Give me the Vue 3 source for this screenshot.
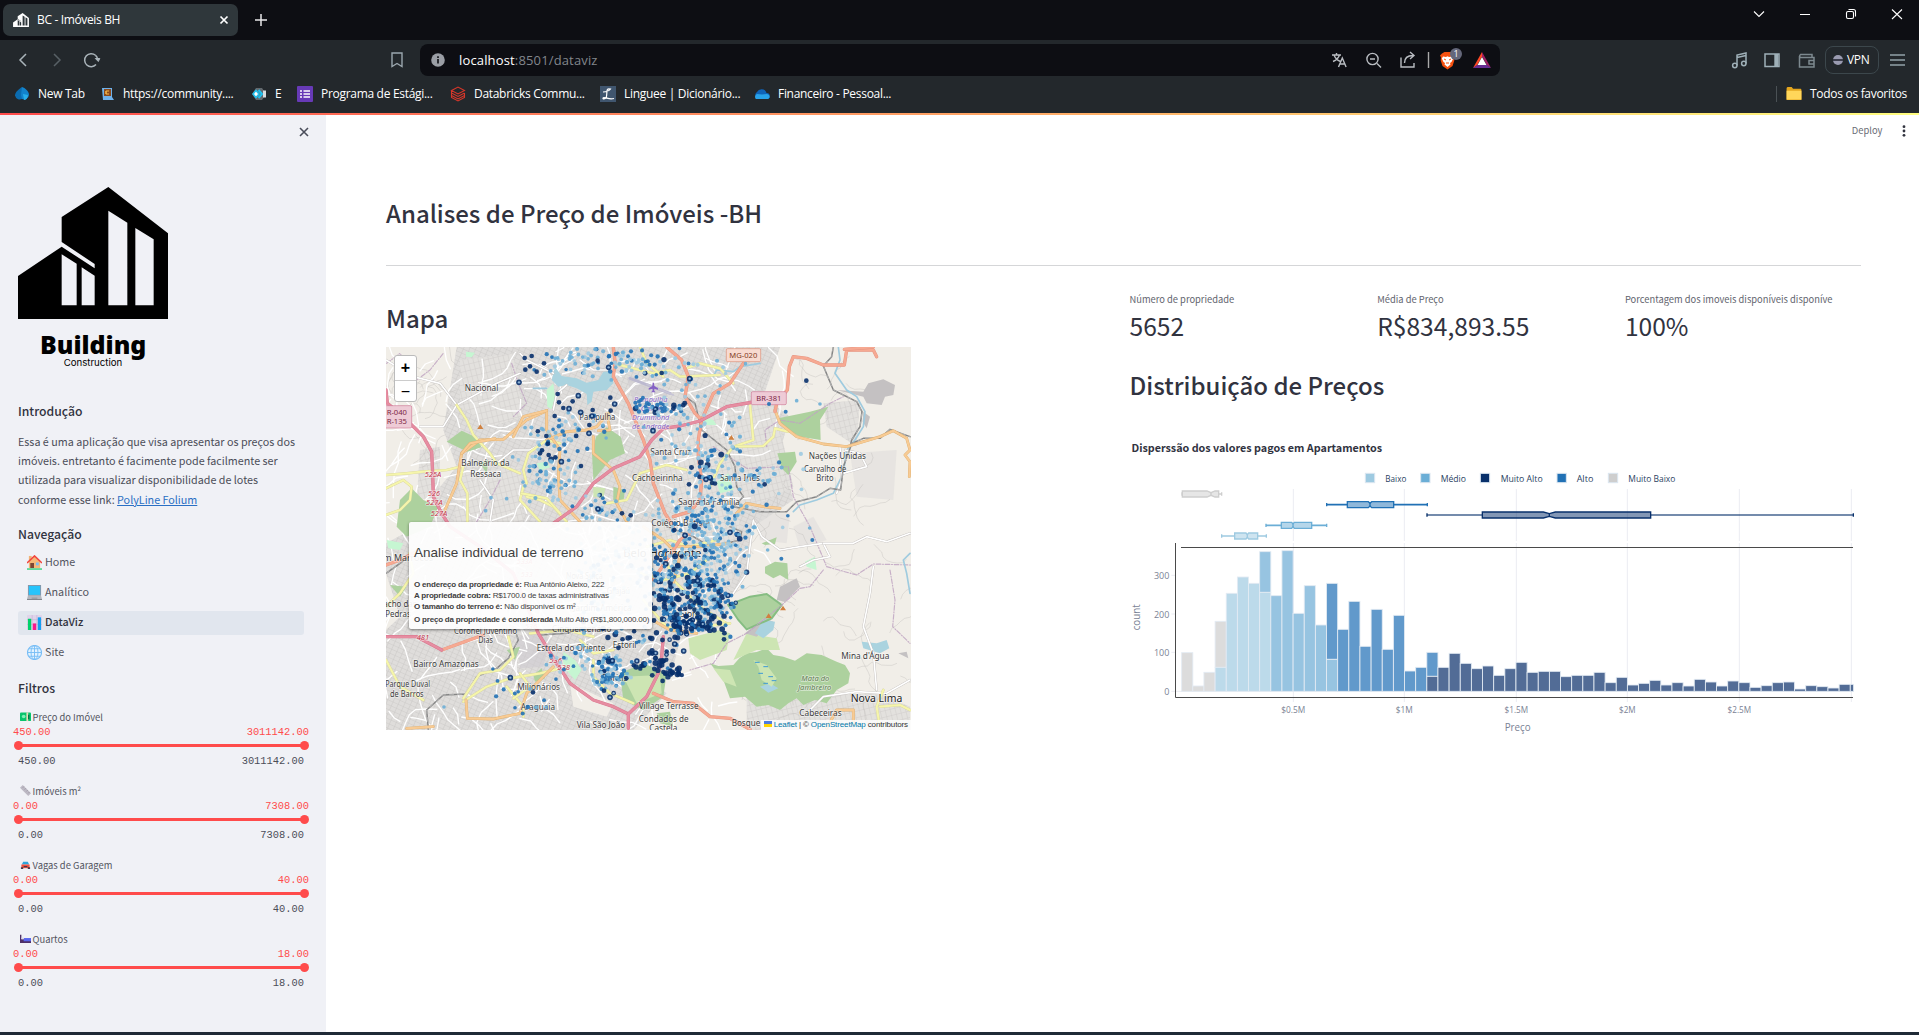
<script setup>
const bookmarks = [
  { icon: 'drop', label: 'New Tab', left: 14, w: 85 },
  { icon: 'robot', label: 'https://community....', left: 99, w: 152 },
  { icon: 'hex', label: 'E', left: 251, w: 46 },
  { icon: 'list', label: 'Programa de Estági...', left: 297, w: 153 },
  { icon: 'layers', label: 'Databricks Commu...', left: 450, w: 150 },
  { icon: 'ling', label: 'Linguee | Dicionário...', left: 600, w: 154 },
  { icon: 'cloud', label: 'Financeiro - Pessoal...', left: 754, w: 150 }
]
const nav = [
  { icon: 'home', label: 'Home' },
  { icon: 'laptop', label: 'Analítico' },
  { icon: 'chart', label: 'DataViz', active: true },
  { icon: 'globe', label: 'Site' }
]
const filters = [
  { icon: 'cash', label: 'Preço do Imóvel', min: '450.00', max: '3011142.00' },
  { icon: 'ruler', label: 'Imóveis m²', min: '0.00', max: '7308.00' },
  { icon: 'car', label: 'Vagas de Garagem', min: '0.00', max: '40.00' },
  { icon: 'bed', label: 'Quartos', min: '0.00', max: '18.00' }
]
const metrics = [
  { label: 'Número de propriedade', value: '5652' },
  { label: 'Média de Preço', value: 'R$834,893.55' },
  { label: 'Porcentagem dos imoveis disponíveis disponíve', value: '100%' }
]

/* ---- histogram ---- */
const tone = { g: '#dcdcdc', l: '#bcdaea', m: '#97c4e1', a: '#6199cb', d: '#526c96' }
const base = 664
const tops = [
  ['g', 548], ['g', 648], ['g', 607], ['g', 454, 'l', 592], ['l', 370], ['l', 321], ['l', 340],
  ['m', 245, 'l', 367], ['m', 377], ['m', 242], ['m', 430], ['m', 347], ['m', 465],
  ['a', 340, 'm', 568], ['a', 478], ['a', 394], ['a', 529], ['a', 418], ['a', 538], ['a', 436],
  ['a', 603], ['a', 592], ['a', 547, 'd', 619], ['d', 592], ['d', 550], ['d', 580], ['d', 596],
  ['d', 588], ['d', 616], ['d', 596], ['d', 577], ['d', 607], ['d', 604], ['d', 604], ['d', 620],
  ['d', 616], ['d', 616], ['d', 607], ['d', 638], ['d', 622], ['d', 645], ['d', 640], ['d', 631],
  ['d', 645], ['d', 638], ['d', 648], ['d', 628], ['d', 636], ['d', 648], ['d', 633], ['d', 638],
  ['d', 652], ['d', 647], ['d', 638], ['d', 636], ['d', 657], ['d', 647], ['d', 650], ['d', 654],
  ['d', 643], ['d', 643]
]
const bars = []
tops.forEach((t, i) => {
  const x = 215 + 33.43 * i
  const w = i === 60 ? 10 : 33.43
  bars.push({ x, y: t[1], w, h: (t[3] || base) - t[1], c: tone[t[0]] })
  if (t[2]) bars.push({ x, y: t[3], w, h: base - t[3], c: tone[t[2]] })
})
const ticksX = [[550, '$0.5M', 72], [883, '$1M', 51], [1219, '$1.5M', 71], [1552, '$2M', 50], [1888, '$2.5M', 71], [2224, '', 0]]
const ticksY = [[316, '300'], [432, '200'], [547, '100'], [664, '0']]
const boxes = [
  { c: '#cecece', y: 72, lo: 216, q1: 217, m: 303, q3: 326, hi: 335, n: 12 },
  { c: '#2171b5', y: 104, lo: 650, q1: 712, m: 780, q3: 851, hi: 952, n: 5 },
  { c: '#08306b', y: 135, lo: 951, q1: 1117, m: 1318, q3: 1622, hi: 2230, n: 18 },
  { c: '#6baed6', y: 166, lo: 468, q1: 514, m: 549, q3: 605, hi: 650, n: 4 },
  { c: '#9ecae1', y: 198, lo: 335, q1: 374, m: 412, q3: 443, hi: 469, n: 4 }
]
const boxPath = (b) => {
  const t = b.y - 9, u = b.y + 9
  return `M${b.q1} ${t}H${b.m - b.n}L${b.m} ${b.y - 4}L${b.m + b.n} ${t}H${b.q3}V${u}H${b.m + b.n}L${b.m} ${b.y + 4}L${b.m - b.n} ${u}H${b.q1}Z`
}
const legend = [
  { c: '#9ecae1', x: 780, t: 'Baixo', tx: 826, w: 63 },
  { c: '#6baed6', x: 946, t: 'Médio', tx: 992, w: 76 },
  { c: '#08306b', x: 1125, t: 'Muito Alto', tx: 1172, w: 126 },
  { c: '#2171b5', x: 1355, t: 'Alto', tx: 1400, w: 50 },
  { c: '#cecece', x: 1509, t: 'Muito Baixo', tx: 1555, w: 141 }
]

/* ---- map ---- */
let seed = 7919
const rnd = () => {
  seed = (seed + 0x6d2b79f5) | 0
  let t = Math.imul(seed ^ (seed >>> 15), 1 | seed)
  t = (t + Math.imul(t ^ (t >>> 7), 61 | t)) ^ t
  return ((t ^ (t >>> 14)) >>> 0) / 4294967296
}
const gauss = () => (rnd() + rnd() + rnd() - 1.5) / 0.75
const streets = []
for (let i = 0; i < 300; i++) {
  let x = 18 + rnd() * 1200, y = 21 + rnd() * 1149
  if (x > 1130 && y > 300) x -= 500
  if (x > 1020 && y > 700) x -= 700
  let a = rnd() * 6.28
  let d = `M${x.toFixed(0)} ${y.toFixed(0)}`
  const n = 2 + Math.floor(rnd() * 4)
  for (let k = 0; k < n; k++) {
    a += (rnd() - 0.5) * 1.1
    x += Math.cos(a) * (18 + rnd() * 24)
    y += Math.sin(a) * (18 + rnd() * 24)
    d += `L${x.toFixed(0)} ${y.toFixed(0)}`
  }
  streets.push(d)
}
const trails = []
for (let i = 0; i < 70; i++) {
  let x = i < 18 ? 30 + rnd() * 200 : 1150 + rnd() * 420
  let y = i < 18 ? 40 + rnd() * 260 : 40 + rnd() * 1100
  let a = rnd() * 6.28
  let d = `M${x.toFixed(0)} ${y.toFixed(0)}`
  for (let k = 0; k < 8; k++) {
    a += (rnd() - 0.5) * 1.8
    x += Math.cos(a) * 16
    y += Math.sin(a) * 16
    d += `L${x.toFixed(0)} ${y.toFixed(0)}`
  }
  trails.push(d)
}
// centre x, centre y, spread x, spread y, amount, share of dark points, share of mid points
const clusters = [
  [600, 55, 90, 32, 40, 0, 0.25], [740, 60, 80, 42, 50, 0.02, 0.4], [850, 80, 70, 45, 20, 0.02, 0.3],
  [500, 330, 80, 70, 46, 0.03, 0.3], [510, 430, 60, 50, 42, 0, 0.15], [590, 270, 70, 45, 22, 0.15, 0.3],
  [845, 205, 55, 12, 28, 0.25, 0.6], [790, 195, 18, 18, 12, 0.2, 0.7],
  [960, 290, 100, 60, 46, 0.03, 0.12], [970, 150, 110, 70, 22, 0, 0.1],
  [970, 395, 35, 50, 36, 0.25, 0.3], [1040, 420, 80, 70, 34, 0, 0.12], [1180, 420, 90, 80, 24, 0, 0.2],
  [960, 540, 110, 55, 115, 0.01, 0.22], [1040, 580, 60, 60, 50, 0.06, 0.4], [650, 500, 50, 32, 26, 0.03, 0.25],
  [950, 660, 120, 50, 100, 0.08, 0.35], [860, 700, 60, 60, 45, 0.35, 0.3],
  [900, 780, 90, 60, 110, 0.38, 0.34], [990, 760, 55, 60, 90, 0.3, 0.42], [940, 850, 75, 30, 90, 0.6, 0.35],
  [680, 700, 110, 120, 110, 0.02, 0.25], [690, 970, 42, 32, 46, 0.03, 0.4], [690, 1015, 50, 32, 40, 0.03, 0.4],
  [570, 940, 50, 50, 20, 0, 0.25], [825, 955, 45, 32, 30, 0.8, 0.2], [875, 995, 34, 18, 18, 0.95, 0.05],
  [800, 890, 90, 26, 22, 0.5, 0.3], [400, 1070, 100, 60, 14, 0, 0.6]
]
const dots = []
clusters.forEach(([cx, cy, sx, sy, n, pd, pm]) => {
  for (let i = 0; i < n; i++) {
    const k = rnd()
    const x = cx + gauss() * sx, y = cy + gauss() * sy
    if (y < 22) continue
    dots.push(k < pd
      ? { x, y, c: '#08306b', r: 6.5 + rnd() * 2.5, ring: rnd() < 0.12 }
      : k < pd + pm
        ? { x, y, c: '#2171b5', r: 5.3 + rnd() * 1.5 }
        : { x, y, c: rnd() < 0.6 ? '#6baed6' : '#9ecae1', r: 5.3 + rnd() })
  }
})
const dark = [[434, 54], [455, 48], [492, 70], [436, 89], [450, 79], [470, 95], [417, 127, 1], [533, 162], [537, 187], [578, 184], [595, 167, 1], [550, 204], [567, 206, 1], [602, 217, 1], [524, 228], [638, 210], [636, 228, 1], [691, 173], [704, 192, 1], [692, 212], [628, 255], [627, 280, 1], [499, 288], [504, 311], [486, 331], [480, 340], [526, 352], [506, 345], [544, 365, 1], [603, 378], [653, 62], [686, 82, 1], [845, 99], [929, 116, 1], [1279, 122], [654, 507, 1], [391, 1013, 1], [459, 1057], [726, 520], [752, 526], [739, 1015], [672, 1052], [690, 1072, 1], [697, 962, 1], [976, 630], [819, 272, 1], [978, 418, 1], [883, 570], [915, 586, 1], [953, 722, 1], [1050, 577, 1], [1032, 898], [911, 933, 1], [884, 912, 1], [927, 433], [996, 429], [1154, 433]]
dark.forEach(([x, y, ring]) => dots.push({ x, y, c: '#08306b', r: ring ? 8.5 : 7, ring: !!ring }))
;[[1297, 600], [1204, 656], [1217, 215], [1167, 192]].forEach(([x, y]) => dots.push({ x, y, c: '#2171b5', r: 6 }))
;[[1289, 564], [1163, 630], [1250, 182], [1320, 192], [192, 1101], [380, 476], [333, 473], [317, 512]].forEach(([x, y]) => dots.push({ x, y, c: '#6baed6', r: 5.5 }))

const greens = [
  'M200 305L245 272L285 290L305 322L262 335Z', 'M60 480L95 445L130 480L175 500L150 560L80 590L50 560Z',
  'M648 290L680 262L722 290L735 340L690 360L640 420L636 340Z', 'M1195 235L1290 215L1345 200L1320 240L1322 300L1260 290L1210 262Z',
  'M1192 340L1245 335L1250 365L1225 405L1205 385Z', 'M1155 680L1185 665L1222 670L1225 720L1200 705L1180 715L1155 700Z',
  'M1045 795L1110 770L1160 762L1195 790L1205 795L1175 835L1100 868L1075 840Z',
  'M1145 610L1190 592L1185 612L1155 615Z',
  'M990 970L1015 978L1060 975L1078 955L1100 940L1130 936L1160 925L1180 945L1210 950L1245 962L1280 940L1325 945L1370 965L1395 975L1410 1000L1405 1030L1370 1050L1340 1090L1305 1080L1270 1095L1250 1075L1225 1090L1200 1110L1165 1095L1130 1100L1095 1070L1050 1075L1030 1020Z',
  'M720 1000L790 970L860 1000L850 1070L790 1110L730 1080Z', 'M380 930L420 920L405 960Z', 'M300 370L325 360L320 400Z', 'M30 735L80 740L60 770Z',
  'M830 1120L870 1115L880 1160L840 1150Z', 'M460 1005L485 985L495 1015L465 1025Z', 'M700 440L735 450L730 485L700 480Z'
]
const limes = ['M640 440L676 445L670 475L640 470Z', 'M925 895L1020 870L1050 880L1040 930L960 960L930 940Z', 'M1100 880L1190 895L1200 930L1130 930L1060 960Z', 'M730 1010L840 1005L845 1060L770 1090Z']
const mints = ['M500 150L520 130L525 170L515 208L502 200Z', 'M1010 425L1045 400L1060 450L1020 460Z', 'M470 370L500 365L510 382L480 392Z', 'M550 935L585 960L605 990L585 1020L550 980Z', 'M960 225L1000 240L1010 255L975 255Z', 'M1275 665L1305 650L1310 690L1280 680Z', 'M258 35L285 38L275 52L258 50Z', 'M20 600L70 610L60 630L25 625Z']
const waters = ['M525 80L545 108L590 115L620 128L655 120L670 95L695 92L700 130L680 150L640 155L635 185L622 195L620 162L590 145L560 135L535 140L515 120Z', 'M1125 880L1150 840L1185 845L1180 870L1150 895Z', 'M1445 905L1490 910L1520 900L1528 925L1500 940L1450 925Z', 'M1140 1040L1170 1030L1195 1045L1165 1058Z']
const rocks = ['M1370 150L1450 155L1465 130L1510 118L1545 135L1540 165L1515 170L1505 195L1460 190L1450 170Z', 'M1450 215L1470 230L1460 265L1448 245Z', 'M1200 740L1250 715L1260 740L1215 785L1190 780Z', 'M1095 880L1150 835L1180 845L1130 890Z', 'M1555 940L1580 935L1585 955Z']
const yellows = [
  'M18 405L80 400L130 395L200 390L250 378', 'M18 525L60 510L90 480L95 440L70 420L18 445', 'M230 195L260 240L280 285L330 340L350 370L420 400',
  'M250 378L240 420L262 460L262 545', 'M88 640L100 700L60 760L18 800', 'M440 470L480 480L520 500L560 545', 'M430 440L420 480L480 545', 'M440 430L430 390L445 340L500 300L540 310', 'M425 460L500 475L540 520',
  'M700 70L760 85L820 100L870 90L900 110L1020 105', 'M780 20L800 70L850 110', 'M920 85L960 70L1020 85L1060 130', 'M1110 195L1120 300L1060 320L1020 370L990 440', 'M1060 320L1150 318L1180 290L1185 265L1225 275',
  'M680 490L740 480L760 440L780 400', 'M780 400L860 375L920 390', 'M250 1085L320 1040L390 1015L480 1000L540 985', 'M385 890L400 950L360 990L300 1000L250 1075', 'M380 1040L430 1100L430 1130', 'M420 1000L450 1040L400 1075',
  'M600 900L640 940L700 930', 'M640 960L640 1010L690 1060L760 1090', 'M1510 1050L1490 1100L1500 1165', 'M1500 1100L1560 1095L1590 1110', 'M450 880L560 870L640 890', 'M780 700L850 720L930 700L980 660', 'M800 620L870 600L930 620L1010 600', 'M790 780L850 850L900 880', 'M850 640L880 720L960 800L1040 850', 'M18 960L60 1040L130 1080', 'M940 800L960 860L1050 850'
]
const oranges = [
  'M195 510L230 430L245 340L300 300L370 298L410 265L440 240L500 212', 'M245 340L270 310L345 296', 'M500 212L500 270L540 330L535 400L540 480L600 545', 'M500 212L430 230L400 290', 'M690 215L650 260L620 270L560 275L500 300',
  'M1185 210L1200 250L1250 290L1330 312L1400 320L1450 305L1500 290L1540 272L1580 295L1590 330L1575 345L1590 365L1588 410', 'M640 290L640 340L700 390L720 440L710 490L740 545', 'M1070 520L1100 490L1150 500L1200 505', 'M258 1080L262 1135L340 1137L420 1120L440 1060L520 980', 'M80 1165L160 1160', 'M1340 1165L1370 1110L1420 1110L1420 1150',
  'M870 620L960 620L1050 610', 'M790 560L850 600L900 650L880 730', 'M800 830L870 870L950 880', 'M680 220L690 270L655 272'
]
const salmons = [
  'M700 21L705 65L700 110L745 190L765 240L790 300L810 360L820 430L855 520L880 560', 'M860 21L905 60L925 110L915 170L945 220L965 240', 'M1090 70L1050 130L1000 160L965 240L955 300L955 350L965 420L960 480L930 515L880 530',
  'M1490 50L1480 30L1400 30L1393 75L1330 75L1280 55L1240 50L1228 80L1222 150L1190 190L1185 215', 'M18 675L60 660L100 640', 'M185 930L310 885', 'M820 1060L880 1085L940 1090L990 1130L1050 1135L1110 1168', 'M1393 28L1480 21', 'M820 720L900 600L970 550'
]
const pinks = [
  'M18 150L22 190L70 230L130 290L155 335L158 400L160 470L185 520L210 560L300 620L400 700L450 820L475 880L530 970L570 1030L640 1080L700 1100L745 1122', 'M745 1165L745 1122L800 1070L835 1000L845 950L850 890', 'M520 550L590 500L640 430L700 385L780 350L815 300L850 265L900 258L960 243L1040 200L1120 186L1160 180', 'M18 890L110 890L185 930'
]
const rails = [
  'M1360 21L1355 50L1330 78L1360 150L1430 185L1446 215L1440 260L1415 300L1412 312', 'M1412 312L1450 295L1500 295L1530 268L1590 290', 'M915 170L945 190L965 270L1040 330L1065 380L1070 440L1090 470L1060 500L1140 515L1220 515L1250 485L1310 470L1350 445L1382 450L1390 380L1415 312', 'M145 1168L140 1110L190 1065L260 1062L290 1010L350 985L385 955L415 900L410 885', 'M18 700L60 670L110 630', 'M860 560L940 590L990 620L1040 610L1080 600L1085 575L1050 560', 'M480 885L560 880L640 860'
]
const creeks = ['M1375 21L1380 60L1365 100L1400 150L1430 170L1455 215L1450 260L1425 300L1400 330L1390 400L1360 460L1310 480L1260 495L1240 515', 'M1590 640L1570 660L1580 700L1590 760', 'M1140 70L1080 80L1060 95L1010 90L1000 110', 'M460 145L500 145']
const bounds = ['M1160 320L1155 270L1200 240L1260 250L1350 190L1390 170', 'M1225 380L1240 470L1290 560L1340 680L1430 705L1480 672L1593 675', 'M1330 690L1290 740L1260 745L1200 800L1100 880L1040 910L1000 970L930 990', 'M1530 690L1545 780L1538 860L1590 910', 'M1000 320L1100 385L1220 380', 'M395 70L415 130L440 190L400 230', 'M360 420L330 480L290 545', 'M20 70L60 40L110 120L150 90L190 40']
const avenues = ['M18 60L100 110L180 130L230 195L350 130L420 100', 'M230 195L190 260L120 260', 'M1120 540L1145 590L1200 630L1260 620L1330 610L1350 650L1300 660L1260 680', 'M1330 610L1420 610L1460 590L1520 605L1590 580', 'M1480 680L1470 760L1450 860L1480 940L1490 1050', 'M1120 540L1110 620L1100 700L1060 760', 'M1380 320L1385 420L1370 460', 'M1395 330L1440 340L1460 380L1390 400', 'M1280 1120L1330 1070L1430 1055L1520 1060L1590 1020', 'M350 370L400 330L450 330L520 290', 'M300 420L340 480L330 545', 'M520 100L440 60L420 40', 'M560 135L530 160L520 210', 'M600 60L640 90L690 90']
// label: x, y, text, width, colour, size, italic
const places = [
  [254, 154, 'Nacional', 101], [598, 239, 'Pampulha', 108], [244, 377, 'Balneário da', 145], [271, 410, 'Ressaca', 92], [756, 423, 'Cachoeirinha', 152],
  [811, 345, 'Santa Cruz', 122], [1019, 423, 'Santa Inês', 121], [895, 494, 'Sagrada Família', 185], [814, 557, 'Colégio Batista', 176], [1286, 356, 'Nações Unidas', 172],
  [1272, 395, 'Carvalho de', 127], [1309, 424, 'Brito', 52], [1384, 956, "Mina d'Água", 144], [1412, 1087, 'Nova Lima', 155, '#222', 31], [1258, 1128, 'Cabeceiras', 127],
  [1055, 1159, 'Bosque', 86], [222, 881, 'Coronel Juventino', 189], [295, 910, 'Dias', 44], [100, 980, 'Bairro Amazonas', 196], [16, 1042, 'Parque Duval', 134],
  [30, 1071, 'de Barros', 101], [412, 1051, 'Milionários', 128], [422, 1109, 'Araguaia', 103], [590, 1165, 'Vila São João', 146], [470, 932, 'Estrela do Oriente', 206],
  [698, 924, 'Estoril', 71], [665, 1022, 'Buritis', 78], [776, 1106, 'Village Terrasse', 180], [776, 1145, 'Condados de', 150], [808, 1173, 'Castela', 84],
  [516, 877, 'Cinquentenário', 178], [10, 662, 'm Marrocos', 150], [10, 802, 'acho das', 100], [16, 832, 'Pedras', 76], [730, 650, 'Belo Horizonte', 234, '#222', 30],
  [558, 718, 'Nova Suíça', 110], [680, 762, 'Grajaú', 70], [580, 812, 'Jardim América', 175], [900, 832, 'Sion', 52],
  [1264, 1022, 'Mata do', 84, '#5d7a50', 22, 1], [1254, 1049, 'Jambreiro', 100, '#5d7a50', 22, 1],
  [762, 186, 'Pampulha', 100, '#8461c4', 22, 1], [782, 213, 'Carlos', 70, '#8461c4', 22, 1], [756, 240, 'Drummond', 112, '#8461c4', 22, 1], [756, 267, 'de Andrade', 112, '#8461c4', 22, 1],
  [134, 410, '525A', 50, '#c2364b', 22, 1], [144, 469, '526', 36, '#c2364b', 22, 1], [138, 496, '527A', 50, '#c2364b', 22, 1], [152, 528, '527A', 50, '#c2364b', 22, 1],
  [110, 900, '481', 38, '#c2364b', 22, 1], [508, 968, '536', 38, '#c2364b', 22, 1], [532, 990, '538', 38, '#c2364b', 22, 1], [410, 672, '533A', 48, '#c2364b', 22, 1], [422, 710, '533', 36, '#c2364b', 22, 1], [434, 866, '536', 38, '#c2364b', 22, 1]
]
</script>

<template>
  <div class="window">
    <div class="tabstrip">
      <div class="tab">
        <svg class="fav" viewBox="54 231 450 397"><path fill="#fff" fill-rule="evenodd" d="M54 498L185 410L284 475V462L185 396V321L325 231L504 370V627H54ZM325 302V586H382V338ZM406 354V586H461V388ZM185 433V586H230V461ZM245 472V586H284V497Z" /></svg>
        <span>BC - Imóveis BH</span>
        <svg class="x" viewBox="0 0 10 10"><path d="M1.5 1.5l7 7m0-7l-7 7" stroke="#fff" stroke-width="1.7" /></svg>
      </div>
      <svg class="plus" viewBox="0 0 12 12"><path d="M6 0v12M0 6h12" stroke="#e8e8ea" stroke-width="1.5" /></svg>
      <svg class="winctl" width="160" height="20" viewBox="0 0 160 20" fill="none" stroke="#fff" stroke-width="1.1">
        <path d="M4 7.5l5 5 5-5M50 10.5h10" /><rect x="96.500" y="7.500" width="7" height="7" rx="1.500" /><path d="M98.500 5.500h5a2 2 0 0 1 2 2v5" /><path d="M142 5.500l10 9.500m0-9.500l-10 9.500" />
      </svg>
    </div>

    <div class="toolbar">
      <svg class="navicons" width="100" height="20" viewBox="0 0 100 20" fill="none" stroke-width="1.500">
        <path d="M17 4L11 10l6 6" stroke="#aab4ba" /><path d="M45 4l6 6-6 6" stroke="#586066" /><path d="M86.500 5.300A6.500 6.500 0 1 0 87 14.500M86.500 5.300a5.500 5.500 0 0 1 2 3.500" stroke="#aab4ba" /><path d="M86.300 8.500h4.500l-1.500 3z" fill="#aab4ba" stroke="#aab4ba" stroke-width="1" />
      </svg>
      <svg class="mark" width="12" height="16" viewBox="0 0 12 16"><path d="M1 1h10v13.500L6 11.500l-5 3z" fill="none" stroke="#9ba7ae" stroke-width="1.400" /></svg>
      <div class="url">
        <svg width="14" height="14" viewBox="0 0 14 14"><circle cx="7" cy="7" r="6.800" fill="#9a9ea5" /><path d="M7 6v4.500M7 3.200v1.700" stroke="#15161b" stroke-width="1.700" /></svg>
        <span class="addr"><b>localhost</b>:8501/dataviz</span>
        <svg class="urlicons" width="168" height="32" viewBox="0 0 168 32" fill="none" stroke="#b9bdc2" stroke-width="1.400">
          <path d="M6 11h9M10.500 9v2M8 11c1 3 4 5.500 6.500 6.500M13.500 11c-1 3-4 5.500-6.500 6.500M12.500 23l3.800-9 3.800 9M14 20h4.700" />
          <circle cx="46.500" cy="15" r="5.600" /><path d="M51 19.500l4 4M44 15h5" />
          <path d="M75 13.500v9.500h13v-4M78.500 19c0-5 3-7.500 8.500-7.500M84 8l4 3.500-4 3.500" />
          <path d="M102.500 8v16" stroke="#aaa" />
          <path d="M116 9.500l2.500-1.500h6l2.500 1.500 2 2-1 2 .3 3-1.800 5.500-5 3.500-5-3.500-1.800-5.500.3-3-1-2z" fill="#f4500f" stroke="none" />
          <path d="M117 12.500l3 .5 1.500-.7 1.500.7 3-.5 1.200 2-1.700 3.500-1.500 1 .5 1.500-3 2.500-3-2.500.5-1.500-1.500-1-1.700-3.500z" fill="#fff" stroke="none" /><path d="M118 15l2 1M125 15l-2 1M120 19h3" stroke="#f4500f" stroke-width="1" />
          <circle cx="130" cy="10" r="6" fill="#64677a" stroke="none" />
          <path d="M156 8L147 24l4-2.500 5-9z" fill="#ff4724" stroke="none" /><path d="M156 8l9 16-4-2.500-5-9z" fill="#9e1f63" stroke="none" /><path d="M147 24h18l-4-3h-10z" fill="#662d91" stroke="none" /><path d="M156 13l-4.500 8h9z" fill="#fff" stroke="none" />
          <text x="127.600" y="13.300" class="badge">1</text>
        </svg>
      </div>
      <svg class="righticons" width="90" height="20" viewBox="0 0 90 20" fill="none" stroke="#9fb0b8" stroke-width="1.500">
        <path d="M7 15.500V5l9-2v10.500M7 7.500l9-2" /><circle cx="4.800" cy="15.500" r="2.200" /><circle cx="13.800" cy="13.500" r="2.200" />
        <rect x="35" y="4" width="14" height="12.500" /><path d="M46.300 4v12.500" stroke-width="4" />
        <path d="M82 7V4.500H70.500a1.800 1.800 0 0 0 0 3H84V17H69.500V6M84 10.500h-5v3.500h5" stroke="#7d898f" />
      </svg>
      <div class="vpn"><i></i>VPN</div>
      <svg class="burger" width="15" height="12" viewBox="0 0 15 12"><path d="M0 1h15M0 6h15M0 11h15" stroke="#93a1a8" stroke-width="1.400" /></svg>
    </div>

    <div class="bookmarks">
      <div v-for="b in bookmarks" :key="b.label" class="bm" :style="{ width: b.w + 'px' }">
        <svg width="16" height="16" viewBox="0 0 16 16">
          <template v-if="b.icon === 'drop'"><path d="M8 1C5 3 1 6 1 9.500A5 5 0 0 0 8 13z" fill="#0b6cb0" /><path d="M8 1c3 1 7 4 7 8a5 5 0 0 1-7 4L7 9z" fill="#1283cc" /><path d="M9 8l5 1c0 3-2 5-4 5z" fill="#28aeea" /></template>
          <template v-else-if="b.icon === 'robot'"><path d="M3 2h10v9l2 3H4z" fill="#6fb2ec" /><rect x="5" y="3" width="7" height="7" fill="#8b4a1c" /><path d="M10 5H7v3h3M7 5v3" stroke="#f6ba4c" fill="none" /></template>
          <template v-else-if="b.icon === 'hex'"><path d="M5 2h6l4 6-4 6H5L1 8z" fill="#62696e" /><path d="M5 4.500L2 8l3 3.500L8 8z" stroke="#1fc1ee" stroke-width="1.500" fill="#fff" /><path d="M7.500 4l3.500 4-3.500 4" stroke="#1fc1ee" stroke-width="2" fill="none" /><path d="M12 4.500h3v7h-3z" fill="#d8dcde" /></template>
          <template v-else-if="b.icon === 'list'"><rect width="16" height="16" rx="1" fill="#673ab7" /><path d="M3 5h2M3 8h2M3 11h2M6.500 5H13M6.500 8H13M6.500 11H13" stroke="#fff" stroke-width="1.500" /></template>
          <template v-else-if="b.icon === 'layers'"><path d="M1.500 4.500L8 1l6.500 3.500L8 8zM1.500 4.500V7L8 10.500 14.500 7M1.500 7v2.500L8 13l6.500-3.500V7M1.500 9.500v2L8 15l6.500-3.500v-2" fill="none" stroke="#d8372a" stroke-width="1.100" /></template>
          <template v-else-if="b.icon === 'ling'"><rect width="16" height="16" fill="#40566f" /><path d="M10 3C5 2 8 8 6 12c-3 2-4 0-2-.5 3 0 5 2.500 10 1M3 6c2 0 6-1 8-3.500" fill="none" stroke="#fff" stroke-width="1.200" /></template>
          <template v-else><path d="M3 12a3.500 3.500 0 0 1 0-6 5.200 5.200 0 0 1 9.500 1A3 3 0 0 1 13 13z" fill="#0f63b8" /><path d="M2 13a3 3 0 0 1 1-5l5 .5 5-.5c3 .5 3.500 4 1 5z" fill="#28a2ea" /></template>
        </svg>
        <span>{{ b.label }}</span>
      </div>
      <div class="allfav">
        <svg width="16" height="13" viewBox="0 0 16 14"><path d="M0 1.500C0 .5 1 0 2 0h3.500L7 2h7.500C15.500 2 16 2.500 16 3.500V14H0z" fill="#e3a51e" /><path d="M0 4h16v9.500H0z" fill="#ffd65a" /></svg>
        <span>Todos os favoritos</span>
      </div>
    </div>
    <div class="rainbow"></div>

    <div class="app">
      <aside>
        <div class="closebar"><svg width="10" height="10" viewBox="0 0 10 10"><path d="M1 1l8 8M9 1l-8 8" stroke="#4a4d5a" stroke-width="1.600" /></svg></div>
        <svg class="logo" viewBox="54 210 450 570">
          <path fill-rule="evenodd" d="M54 498L185 410L284 475V462L185 396V321L325 231L504 370V627H54ZM325 302V586H382V338ZM406 354V586H461V388ZM185 433V586H230V461ZM245 472V586H284V497Z" />
          <text x="120" y="733" font-size="74" font-weight="900" class="build" textLength="319" lengthAdjust="spacingAndGlyphs">Building</text>
          <text x="191" y="768" font-size="28" class="constr" textLength="176" lengthAdjust="spacingAndGlyphs">Construction</text>
        </svg>
        <h3 class="first">Introdução</h3>
        <p>Essa é uma aplicação que visa apresentar os preços dos<br>imóveis. entretanto é facimente pode facilmente ser<br>utilizada para visualizar disponibilidade de lotes<br>conforme esse link: <a>PolyLine Folium</a></p>
        <h3>Navegação</h3>
        <nav>
          <div v-for="n in nav" :key="n.label" class="item" :class="{ active: n.active }">
            <svg width="15" height="15" viewBox="0 0 16 16">
              <template v-if="n.icon === 'home'"><path d="M2 1h3v6H2z" fill="#f0b478" /><path d="M2 7l6-5.500L14 7v7.500H2z" fill="#f5b878" /><path d="M0 8.500L8 1l8 7.500" fill="none" stroke="#f2453d" stroke-width="1.700" /><path d="M3.500 8.500h4V14h-4z" fill="#7d4533" /><path d="M9.500 8h3v3h-3z" fill="#7bbcf5" /><path d="M0 14h16v2H0z" fill="#63d99b" /></template>
              <template v-else-if="n.icon === 'laptop'"><rect x="1" y="0" width="14" height="11.500" fill="#8796a8" /><rect x="2" y="1" width="12" height="9.500" fill="#27c4fb" /><path d="M1 11.500h14l1 3.500H0z" fill="#b3b6bd" /><path d="M0 15h16v1H0zM5 13.500h6v1H5z" fill="#83868d" /></template>
              <template v-else-if="n.icon === 'chart'"><rect width="16" height="16" rx="1" fill="#dfd3ea" /><path d="M0 5h16M0 10h16M5.500 0v16M10.500 0v16" stroke="#c3b1d2" stroke-width=".6" /><path d="M1 4h3.500v12H1z" fill="#00d26a" /><path d="M6.200 9h3.600v7H6.200z" fill="#f8178c" /><path d="M11.500 2.500H15V16h-3.500z" fill="#129ff0" /></template>
              <template v-else><circle cx="8" cy="8" r="7.500" fill="#e4f3ff" stroke="#79bef5" stroke-width="1.200" /><path d="M8 .5v15M.5 8h15M2 4h12M2 12h12" stroke="#79bef5" /><ellipse cx="8" cy="8" rx="3.700" ry="7.500" fill="none" stroke="#79bef5" /></template>
            </svg>
            <span>{{ n.label }}</span>
          </div>
        </nav>
        <h3 class="filt">Filtros</h3>
        <div v-for="f in filters" :key="f.label" class="filter">
          <div class="flabel">
            <svg width="11" height="11" viewBox="0 0 12 12">
              <template v-if="f.icon === 'cash'"><rect y="1.500" width="12" height="9.500" rx="1" fill="#08c46c" /><path d="M7 1.500h2V11H7z" fill="#e9dcb8" /><circle cx="4" cy="6" r="2" fill="#7ff0b5" /><path d="M9.500 4v5" stroke="#037548" stroke-width="1.500" /></template>
              <template v-else-if="f.icon === 'ruler'"><path d="M3 0l9 9-3 3-9-9z" fill="#bdb9c4" /><path d="M3 3l1.500-1.500M5 5l1.500-1.500M7 7l1.500-1.500M9 9l1.500-1.500" stroke="#918d99" stroke-width=".7" /></template>
              <template v-else-if="f.icon === 'car'"><path d="M3.500 3h5l1.500 3H2z" fill="#2fa6dc" /><path d="M1.500 6h9v4h-9z" fill="#f3503e" /><path d="M1 9h2.500v2H1zM8.500 9H11v2H8.500zM4 7.500h4V9H4z" fill="#433b4c" /></template>
              <template v-else><path d="M0 2h1.500v4.500H12V11H0z" fill="#4e3068" /><path d="M4 5.500h8v3.500H4z" fill="#5866ee" /><path d="M1.500 5H4v2H1.500z" fill="#dcd9ea" /></template>
            </svg>
            <span>{{ f.label }}</span>
          </div>
          <div class="vals red"><span>{{ f.min }}</span><span>{{ f.max }}</span></div>
          <div class="track"><i></i><i></i></div>
          <div class="vals"><span>{{ f.min }}</span><span>{{ f.max }}</span></div>
        </div>
      </aside>

      <main>
        <div class="top"><span>Deploy</span><svg width="4" height="12" viewBox="0 0 4 12" fill="#31333f"><circle cx="2" cy="1.700" r="1.400" /><circle cx="2" cy="6" r="1.400" /><circle cx="2" cy="10.300" r="1.400" /></svg></div>
        <h1>Analises de Preço de Imóveis -BH</h1>
        <hr>
        <div class="cols">
          <section class="left">
            <h2>Mapa</h2>
            <div class="map">
              <svg width="525" height="383" viewBox="18 21 1575 1149">
                <defs>
                  <pattern id="grid" width="17" height="13" patternUnits="userSpaceOnUse" patternTransform="rotate(24)"><rect width="17" height="13" fill="#dfdddb" /><path d="M0 0H17M0 0V13" stroke="#cbc9c7" stroke-width="3" /></pattern>
                  <pattern id="grid2" width="15" height="19" patternUnits="userSpaceOnUse" patternTransform="rotate(-14)"><rect width="15" height="19" fill="#e3e1de" /><path d="M0 0H15M0 0V19" stroke="#cfccca" stroke-width="2.800" /></pattern>
                </defs>
                <rect x="18" y="21" width="1575" height="1149" fill="#f1eee8" />
                <path fill="url(#grid)" d="M230 21H1200L1150 170L1230 230L1200 330L1240 480L1120 560L1100 700L1040 780L1020 860L900 900L860 1060L760 1170H18V870L60 830L18 700V610L110 560L180 440L230 380L190 270Z" />
                <path fill="url(#grid2)" d="M240 400L420 380L430 560H220ZM240 60L400 40L430 230L330 260L240 200ZM820 260L1180 180L1240 440L1000 560L840 480ZM120 330L180 320V470L110 480ZM1330 190L1440 180L1430 320L1340 260ZM1100 1070L1500 1060L1590 1100V1170H1100ZM780 560L1080 540L1040 840L820 860Z" />
                <path fill="#dedcda" d="M1240 560L1300 530L1340 600L1260 625ZM1130 520L1230 520L1220 610L1140 600ZM1410 340L1550 330L1540 480L1430 470Z" opacity=".55" />
                <path fill="#f1eee8" d="M300 780L380 800L390 870L310 880ZM790 1010L1000 980L990 1060L860 1060ZM570 1030L700 1090L680 1130L580 1100Z" />
                <path fill="#cfccd0" d="M410 890L470 880L510 900L490 980L420 985ZM740 110L860 155L870 200L760 190Z" opacity=".6" />
                <g fill="none" stroke-linejoin="round">
                  <g stroke="#bcb9b7" stroke-width="2"><path v-for="(d, i) in trails" :key="i" :d="d" opacity=".55" /></g>
                  <g stroke="#fff" stroke-width="4"><path v-for="(d, i) in streets" :key="i" :d="d" /></g>
                </g>
                <path v-for="(d, i) in greens" :key="'g' + i" :d="d" fill="#add19e" />
                <path v-for="(d, i) in limes" :key="'l' + i" :d="d" fill="#cde5b3" />
                <path v-for="(d, i) in mints" :key="'m' + i" :d="d" fill="#c6f6d2" />
                <path v-for="(d, i) in rocks" :key="'r' + i" :d="d" fill="#c4c1c2" />
                <path v-for="(d, i) in waters" :key="'w' + i" :d="d" fill="#aad3df" />
                <path d="M1045 795L1110 770L1160 762L1205 795L1175 835L1100 868L1075 840Z" fill="none" stroke="#86bd82" stroke-width="6" />
                <path d="M1120 960l40 15l30 40l-15 25l-30-20l-10-40zM1000 985l50 5l20 50l-40-15z" fill="#cde5b3" />
                <path d="M1125 967h14M1150 980h14M1135 1000h14M1165 1010h14M1150 1030h14M1175 1022h14" stroke="#3d9ad6" stroke-width="3" />
                <g fill="none" stroke-linejoin="round" stroke-linecap="round">
                  <path v-for="(d, i) in bounds" :key="'b' + i" :d="d" stroke="#bfa5c2" stroke-width="3.500" stroke-dasharray="14 5 3 5" opacity=".85" />
                  <path v-for="(d, i) in creeks" :key="'c' + i" :d="d" stroke="#9fcbdf" stroke-width="5" />
                  <g v-for="(d, i) in avenues" :key="'a' + i"><path :d="d" stroke="#bdb9b7" stroke-width="7" /><path :d="d" stroke="#fff" stroke-width="5" /></g>
                  <g v-for="(d, i) in rails" :key="'t' + i"><path :d="d" stroke="#858585" stroke-width="4.500" /><path :d="d" stroke="#c6c6c6" stroke-width="2" stroke-dasharray="12 12" /></g>
                  <g v-for="(d, i) in yellows" :key="'y' + i"><path :d="d" stroke="#d3d09c" stroke-width="8" /><path :d="d" stroke="#f5f5ab" stroke-width="6.500" /></g>
                  <g v-for="(d, i) in oranges" :key="'o' + i"><path :d="d" stroke="#dcae70" stroke-width="8.500" /><path :d="d" stroke="#f8cb94" stroke-width="6.500" /></g>
                  <g v-for="(d, i) in salmons" :key="'s' + i"><path :d="d" stroke="#e49480" stroke-width="10" /><path :d="d" stroke="#f6a992" stroke-width="7.500" /></g>
                  <g v-for="(d, i) in pinks" :key="'p' + i"><path :d="d" stroke="#d8758d" stroke-width="10" /><path :d="d" stroke="#e68da1" stroke-width="7.500" /></g>
                  <path d="M750 115L870 160" stroke="#bcb9cf" stroke-width="9" /><path d="M800 132L880 165" stroke="#c7c4d6" stroke-width="5" />
                </g>
                <path d="M292 267l9-14 9 14zM1045 299l9-14 9 14zM1157 834l9-14 9 14zM1200 811l9-14 9 14z" fill="#d08140" />
                <path d="M818 128l4 0l1 10l11 7v4l-11-3v7l4 4h-14l4-4v-7l-11 3v-4l11-7z" fill="#8461c4" />
                <g class="place">
                  <text v-for="(p, i) in places" :key="'n' + i" :x="p[0]" :y="p[1]" :textLength="p[3]" lengthAdjust="spacingAndGlyphs" :fill="p[4] || '#3c3c3c'" :font-size="p[5] || 25" :font-style="p[6] ? 'italic' : 'normal'">{{ p[2] }}</text>
                </g>
                <g class="shield">
                  <rect x="-10" y="197" width="105" height="67" rx="4" fill="#eecbd6" stroke="#d07c98" stroke-width="2" /><text x="20" y="225" fill="#7c2744" textLength="61" lengthAdjust="spacingAndGlyphs">R-040</text><text x="20" y="252" fill="#7c2744" textLength="61" lengthAdjust="spacingAndGlyphs">R-135</text>
                  <rect x="1039" y="26" width="103" height="39" rx="4" fill="#f8dad0" stroke="#dd8f78" stroke-width="2" /><text x="1048" y="53" fill="#833a24" textLength="84" lengthAdjust="spacingAndGlyphs">MG-020</text>
                  <rect x="1114" y="155" width="105" height="39" rx="4" fill="#eecbd6" stroke="#d07c98" stroke-width="2" /><text x="1129" y="183" fill="#7c2744" textLength="75" lengthAdjust="spacingAndGlyphs">BR-381</text>
                </g>
                <g v-for="(p, i) in dots" :key="'d' + i"><circle :cx="p.x" :cy="p.y" :r="p.r" :fill="p.c" opacity=".9" /><circle v-if="p.ring" :cx="p.x" :cy="p.y" r="3.500" fill="#8fb4d6" /></g>
              </svg>
              <div class="zoomctl"><b>+</b><b>−</b></div>
              <div class="tip">
                <h4>Analise individual de terreno</h4>
                <div><b>O endereço da propriedade é:</b> Rua Antônio Aleixo, 222</div>
                <div><b>A propriedade cobra:</b> R$1700.0 de taxas administrativas</div>
                <div><b>O tamanho do terreno é:</b> Não disponível os m²</div>
                <div><b>O preço da propriedade é considerada</b> Muito Alto (R$1,800,000.00)</div>
              </div>
              <div class="attr"><svg width="8" height="6" viewBox="0 0 8 6"><path d="M0 0h8v3H0z" fill="#4c7be1" /><path d="M0 3h8v3H0z" fill="#ffd500" /></svg><a>Leaflet</a> | © <a>OpenStreetMap</a> contributors</div>
            </div>
          </section>
          <section class="right">
            <div class="metrics">
              <div v-for="m in metrics" :key="m.label"><label>{{ m.label }}</label><strong>{{ m.value }}</strong></div>
            </div>
            <h2>Distribuição de Preços</h2>
            <div class="ctitle">Disperssão dos valores pagos em Apartamentos</div>
            <svg class="chart" width="770" height="280" viewBox="0 0 2310 840">
              <g v-for="l in legend" :key="l.t"><rect :x="l.x - 14" y="10" width="28" height="28" :fill="l.c" stroke="#dbe6f0" stroke-width="3" /><text :x="l.tx" y="36" font-size="27" fill="#2a3f5f" :textLength="l.w" lengthAdjust="spacingAndGlyphs">{{ l.t }}</text></g>
              <path v-for="t in ticksX" :key="t[0]" :d="`M${t[0]} 57V213M${t[0]} 219V696`" stroke="#ebecf2" stroke-width="3" />
              <path d="M184 316H196M184 432H196M184 547H196M184 664H2230" stroke="#ebecf2" stroke-width="3" />
              <g v-for="b in boxes" :key="b.c" fill="none" :stroke="b.c">
                <path :d="`M${b.lo} ${b.y}H${b.q1}M${b.q3} ${b.y}H${b.hi}`" stroke-width="5" :opacity="b.c === '#08306b' ? .75 : 1" />
                <path :d="`M${b.lo} ${b.y - 5}V${b.y + 5}M${b.hi} ${b.y - 5}V${b.y + 5}`" stroke-width="4" />
                <path :d="boxPath(b)" :fill="b.c" fill-opacity=".5" stroke-width="4" />
                <path :d="`M${b.m} ${b.y - 5}V${b.y + 5}`" stroke-width="4" />
              </g>
              <rect v-for="(b, i) in bars" :key="i" :x="b.x" :y="b.y" :width="b.w" :height="b.h" :fill="b.c" stroke="#e3ebf3" stroke-width="2.600" />
              <path d="M213 232.500H2229M196.500 219V682.500H2229" fill="none" stroke="#4a4a4a" stroke-width="3" />
              <g fill="#7a8294">
                <text v-for="t in ticksX" :key="t[0]" :x="t[0] - t[2] / 2" y="730" font-size="29" :textLength="t[2] || null" lengthAdjust="spacingAndGlyphs">{{ t[1] }}</text>
                <text v-for="t in ticksY" :key="t[0]" x="178" :y="t[0] + 11" font-size="27" text-anchor="end">{{ t[1] }}</text>
                <text x="1184" y="783" font-size="32" textLength="78" lengthAdjust="spacingAndGlyphs">Preço</text>
                <text transform="translate(90 481) rotate(-90)" font-size="31" textLength="78" lengthAdjust="spacingAndGlyphs">count</text>
              </g>
            </svg>
          </section>
        </div>
      </main>
    </div>
    <div class="taskbar"></div>
  </div>
</template>

<style>
body { margin: 0; background: #fff; }
</style>

<style scoped>
* { box-sizing: border-box; }
.window { width: 1919px; height: 1035px; overflow: hidden; display: flex; flex-direction: column; font-family: "Noto Sans CJK SC", "Noto Sans", sans-serif; color: #31333f; }
.window svg { flex: none; }
.tabstrip { height: 40px; background: #0d0e13; display: flex; align-items: flex-start; padding: 4px 0 0 3px; font: 12px "Open Sans", sans-serif; }
.tab { width: 235px; height: 32px; background: #2f373b; border-radius: 7px; display: flex; align-items: center; color: #fff; padding: 0 9px 0 10px; letter-spacing: -.35px; }
.fav { width: 16px; height: 14px; margin-right: 8px; }
.tab span { flex: 1; padding-bottom: 1px; }
.x { width: 10px; height: 10px; }
.plus { width: 12px; height: 12px; margin: 10px 0 0 17px; }
.winctl { margin: 0 9px 0 auto; width: 160px; }
.toolbar { height: 40px; background: #23282c; display: flex; align-items: center; }
.navicons { margin-left: 9px; width: 100px; }
.mark { margin: 0 0 0 282px; }
.url { margin-left: 17px; width: 1080px; height: 32px; border-radius: 8px; background: #0d0e13; display: flex; align-items: center; padding-left: 11px; }
.addr { margin-left: 14px; font: 13px "Open Sans", sans-serif; color: #82868c; flex: 1; letter-spacing: .15px; }
.addr b { font-weight: 400; color: #fff; }
.badge { font: 9px "Open Sans", sans-serif; fill: #fff; stroke: none; }
.urlicons { width: 168px; margin-right: 6px; }
.righticons { margin-left: 230px; }
.vpn { margin-left: 5px; width: 54px; height: 28px; border: 1px solid #3c474c; border-radius: 8px; display: flex; align-items: center; padding: 0 0 1px 7px; font: 12px "Open Sans", sans-serif; color: #fff; letter-spacing: -.3px; }
.vpn i { width: 10px; height: 10px; border-radius: 50%; background: linear-gradient(#9a9bb0 4px, #3b3d4c 4px 6px, #9a9bb0 6px); margin-right: 4px; }
.burger { margin-left: 11px; }
.bookmarks { height: 33px; background: #23282c; display: flex; align-items: center; padding: 0 0 6px 14px; font: 12px "Open Sans", sans-serif; color: #fff; }
.bm { display: flex; align-items: center; white-space: nowrap; letter-spacing: -.3px; }
.bm span { margin-left: 8px; padding-bottom: 1px; }
.allfav { margin-left: auto; height: 16px; display: flex; align-items: center; border-left: 1px solid #4a5155; padding: 0 12px 0 9px; gap: 8px; letter-spacing: -.3px; }
.allfav span { padding-bottom: 1px; }
.rainbow { height: 2px; background: linear-gradient(90deg, #ff4b4b, #fffd80); }
.app { height: 917px; display: flex; }
.taskbar { height: 3px; background: #1f2a36; }
aside { width: 326px; flex: none; background: #f0f1f6; padding: 0 22px 0 18px; }
.closebar { height: 65px; display: flex; justify-content: flex-end; padding-top: 12px; margin-right: -5px; }
.logo { display: block; width: 150px; height: 190px; }
.build { font-family: "Noto Sans", sans-serif; }
.constr { font-family: Inter, sans-serif; }
h3 { font-size: 12.2px; line-height: 24px; margin: 14px 0 5px; font-weight: 500; }
h3.first { margin: 29px 0 9px; }
h3.filt { margin: 11px 0 8px; }
p { margin: 0; font-size: 10.75px; line-height: 19.2px; white-space: nowrap; color: #4b4d58; }
a { color: #2a6fc4; }
p a { text-decoration: underline; }
p + h3 { margin-top: 13px; }
nav { display: flex; flex-direction: column; gap: 6px; }
.item { height: 24px; border-radius: 3px; display: flex; align-items: center; padding-left: 9px; font-size: 10.75px; line-height: 20px; color: #53555f; }
.item span { padding-bottom: 2px; }
.item svg { margin-right: 3px; }
.item.active { background: #e1e6ee; color: #31333f; font-weight: 500; }
.filter { height: 60px; margin-bottom: 14px; }
.flabel { height: 18px; display: flex; align-items: center; padding-left: 2px; font-size: 9.4px; line-height: 18px; color: #53555f; gap: 1.5px; }
.vals { display: flex; justify-content: space-between; font: 10.4px/14px "Liberation Mono", monospace; color: #4b4d58; }
.vals.red { color: #ff4b4b; line-height: 12px; margin: 0 -5px; }
.track { height: 3px; background: #ff4b4b; margin: 6px 0 7px; display: flex; align-items: center; justify-content: space-between; }
.track i { width: 9px; height: 9px; border-radius: 50%; background: #ff4b4b; margin: 0 -4.5px; }
main { flex: 1; padding: 0 59px 0 60px; }
.top { height: 71px; display: flex; justify-content: flex-end; align-items: flex-start; margin-right: -45px; gap: 19px; font-size: 9.4px; line-height: 30px; color: #6a6c75; }
.top svg { margin-top: 10px; }
h1, h2 { font-size: 24px; font-weight: 500; line-height: 32px; margin: 0; white-space: nowrap; }
h1 { padding-top: 11px; height: 79px; }
hr { margin: 0; border: 0; height: 1px; background: #d5d6d8; }
.cols { display: flex; }
.left { width: 525px; flex: none; }
.left h2 { padding-top: 36px; height: 81px; }
.map { position: relative; width: 525px; height: 383px; overflow: hidden; }
.map > svg { display: block; }
.place text { font-family: "Noto Sans", sans-serif; stroke: rgba(255,255,255,.55); stroke-width: 4px; paint-order: stroke; }
.shield text { font: 22px "Noto Sans", sans-serif; }
.zoomctl { position: absolute; left: 8px; top: 8px; width: 23px; height: 47px; border: 1px solid #bbb; border-radius: 3px; background: #fff; display: flex; flex-direction: column; }
.zoomctl b { flex: 1; text-align: center; font: bold 16px/24px "Liberation Sans", sans-serif; color: #000; }
.zoomctl b + b { border-top: 1px solid #ccc; font-weight: 400; line-height: 22px; }
.tip { position: absolute; left: 23px; top: 175px; width: 243px; height: 107px; background: #fff; opacity: .93; border-radius: 2px; box-shadow: 0 1px 3px rgba(0,0,0,.5); padding: 0 5px; font: 8px/11.2px "Liberation Sans", sans-serif; color: #333; white-space: nowrap; letter-spacing: -.2px; }
.tip h4 { margin: 21px 0 16px; font-size: 13.5px; line-height: 20px; font-weight: 400; letter-spacing: 0; }
.tip div:last-child { padding-top: 1px; }
.attr { position: absolute; right: 0; bottom: 0; height: 10px; padding: 0 3px; background: rgba(255,255,255,.8); font: 8px/10px "Liberation Sans", sans-serif; color: #333; white-space: nowrap; letter-spacing: -.13px; }
.attr svg { margin-right: 2px; }
.attr a { color: #0078a8; }
.right { margin-left: 218.500px; width: 731px; }
.metrics { display: flex; padding-top: 24px; height: 103px; }
.metrics div { width: 247.7px; flex: none; white-space: nowrap; }
.metrics label { display: block; font-size: 9.35px; line-height: 18px; color: #62646e; }
.metrics strong { display: block; font-size: 24.6px; font-weight: 400; line-height: 34px; }
.right h2 { height: 60px; }
.ctitle { font-size: 10.75px; font-weight: 700; line-height: 20px; padding: 9px 0 0 2px; height: 41px; white-space: nowrap; }
.chart { display: block; margin-left: -19.500px; font-family: "Open Sans", sans-serif; }
</style>
